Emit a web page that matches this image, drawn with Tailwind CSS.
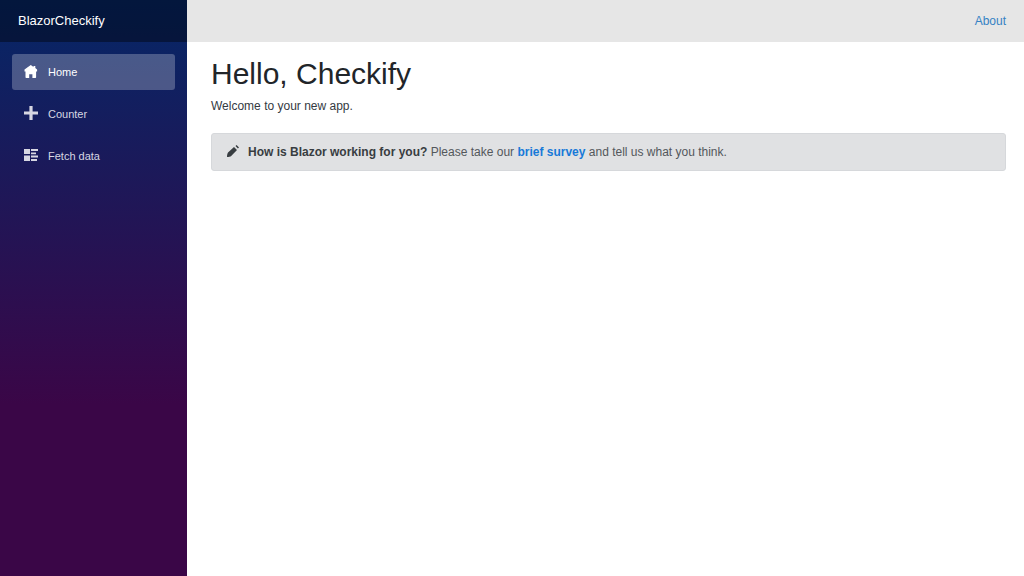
<!DOCTYPE html>
<html lang="en">
<head>
<meta charset="utf-8">
<meta name="viewport" content="width=device-width, initial-scale=1">
<title>BlazorCheckify</title>
<script src="https://cdn.jsdelivr.net/npm/@tailwindcss/browser@4"></script>
</head>
<body class="flex min-h-screen bg-white font-['Liberation_Sans',Arial,sans-serif] text-xs text-[#212529]">
  <aside class="w-[187px] shrink-0 bg-linear-to-b/srgb from-[#052767] to-[#3a0647] to-70%">
    <div class="flex h-[42px] items-center bg-black/40 px-[18px]">
      <a href="#" class="text-[13px] text-white">BlazorCheckify</a>
    </div>
    <nav class="flex flex-col gap-[6px] p-3 text-[11px] text-[#d7d7e2]">
      <a href="#" aria-current="page" class="flex h-9 items-center gap-[10px] rounded-[3px] bg-white/25 px-3 text-white">
        <svg class="mb-[2px] size-[14px]" viewBox="0 0 14 14" fill="currentColor" aria-hidden="true"><path d="M6.800 1L.5 5.400v2.200h1v5.600c0 .4.3.8.7.8h3v-3.800h3.200V14h3c.4 0 .7-.4.7-.8V7.600h1V5.400l-1.800-1.300V2H9.500v1z"/></svg>
        Home
      </a>
      <a href="#" class="flex h-9 items-center gap-[10px] px-3">
        <svg class="mb-[2px] size-[14px]" viewBox="0 0 14 14" fill="currentColor" aria-hidden="true"><path d="M5.400 0v5.400H0v3.200h5.400V14h3.200V8.600H14V5.400H8.600V0z"/></svg>
        Counter
      </a>
      <a href="#" class="flex h-9 items-center gap-[10px] px-3">
        <svg class="mb-[2px] size-[14px]" viewBox="0 0 14 14" fill="currentColor" aria-hidden="true"><path d="M0 1h6v5H0zM7 1h7v2H7zM7 4.400h5v1.800H7zM0 7.600h6V13H0zM7 7.600h7v1.800H7zM7 11h6v2H7z"/></svg>
        Fetch data
      </a>
    </nav>
  </aside>
  <div class="flex min-w-0 flex-1 flex-col">
    <header class="flex h-[42px] items-center justify-end bg-[#e6e6e6] px-[18px]">
      <a href="#" class="text-[#3582c4]">About</a>
    </header>
    <main class="pt-[14px] pr-[18px] pl-6">
      <h1 class="text-[30px] leading-9">Hello, Checkify</h1>
      <p class="mt-[5px] leading-[18px] text-[#343a3f]">Welcome to your new app.</p>
      <div class="mt-[18px] flex items-center rounded-[3px] border border-[#d6d8db] bg-[#e0e1e3] px-[15px] py-2 leading-5 text-[#53575b]">
        <svg class="mr-[9px] mb-[2px] size-3 shrink-0 text-[#383d41]" viewBox="0 0 12 12" fill="currentColor" aria-hidden="true"><path d="M9.600 0L8.500 1.100l2.400 2.400L12 2.400zM7 2L1 7.600C.5 8.100 0 10.400 0 12c1.500 0 3.600-.4 4.200-1L10 5z"/></svg>
        <p><strong class="text-[#383d41]">How is Blazor working for you?</strong> Please take our <a href="#" class="font-bold text-[#1879d8]">brief survey</a> and tell us what you think.</p>
      </div>
    </main>
  </div>
</body>
</html>
